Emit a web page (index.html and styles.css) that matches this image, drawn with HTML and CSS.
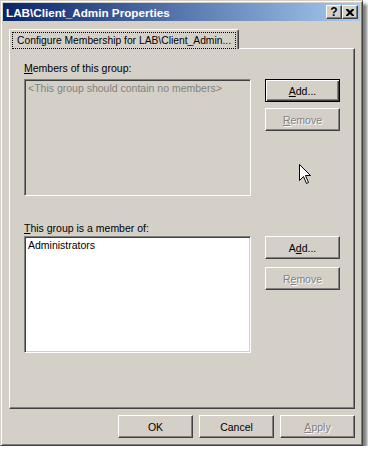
FILE: index.html
```html
<!DOCTYPE html>
<html lang="en">
<head>
  <meta charset="UTF-8">
  <title>LAB\Client_Admin Properties</title>
  <link rel="stylesheet" href="styles.css">
</head>
<body>
  <div class="window">
    <!-- Title bar -->
    <div class="titlebar">
      <span class="title">LAB\Client_Admin Properties</span>
      <div class="caption-buttons">
        <div class="caption-btn">?</div>
        <div class="caption-btn">
          <svg width="8" height="7" viewBox="0 0 8 7"><path d="M0 0h2l2 2 2-2h2v1l-2.5 2.5L8 6v1H6L4 5 2 7H0V6l2.5-2.5L0 1z" fill="#000"/></svg>
        </div>
      </div>
    </div>

    <!-- Tabs -->
    <div class="tabs">
      <div class="tab">
        <span class="tab-focus">Configure Membership for LAB\Client_Admin...</span>
      </div>
    </div>

    <div class="panel">
      <div class="label first"><u>M</u>embers of this group:</div>
      <div class="group-row">
        <div class="listbox disabled">
          <div class="item">&lt;This group should contain no members&gt;</div>
        </div>
        <div class="side-buttons tight">
          <div class="btn default"><u>A</u>dd...</div>
          <div class="btn disabled"><u>R</u>emove</div>
        </div>
      </div>

      <div class="label second"><u>T</u>his group is a member of:</div>
      <div class="group-row">
        <div class="listbox">
          <div class="item">Administrators</div>
        </div>
        <div class="side-buttons">
          <div class="btn">A<u>d</u>d...</div>
          <div class="btn disabled">R<u>e</u>move</div>
        </div>
      </div>
    </div>

    <div class="footer">
      <div class="btn">OK</div>
      <div class="btn">Cancel</div>
      <div class="btn disabled"><u>A</u>pply</div>
    </div>

    <!-- mouse pointer -->
    <svg class="cursor" width="13" height="21" viewBox="0 0 13 21">
      <path d="M0.5 0.5V16.5L4.5 12.5L7.5 19.5L9.5 18.5L6.5 11.5H11.5Z" fill="#fff" stroke="#000" stroke-width="1"/>
    </svg>
  </div>
</body>
</html>
```

FILE: styles.css
```css
body {
  margin: 0;
  background: #fff;
  font-family: "Liberation Sans", Arial, sans-serif;
  font-size: 10.5px;
  color: #000;
}
.window {
  position: relative;
  width: 363px;
  height: 446px;
  box-sizing: border-box;
  background: #d4d0c8;
  border: 1px solid;
  border-color: #d4d0c8 #404040 #404040 #d4d0c8;
  box-shadow: inset 1px 1px #fff, inset -1px -1px #808080, 4px 4px 3px rgba(0, 0, 0, 0.5);
  padding: 2px;
}
.titlebar {
  height: 18px;
  display: flex;
  align-items: center;
  justify-content: space-between;
  background: linear-gradient(to right, #0a246a, #a6caf0);
  padding: 0 2px 0 2px;
}
.title {
  color: #fff;
  font-weight: bold;
  font-size: 11.7px;
  padding-left: 1px;
}
.caption-buttons {
  display: flex;
}
.caption-btn {
  width: 16px;
  height: 14px;
  box-sizing: border-box;
  background: #d4d0c8;
  border: 1px solid;
  border-color: #fff #404040 #404040 #fff;
  box-shadow: inset -1px -1px #808080;
  display: flex;
  align-items: center;
  justify-content: center;
  font-weight: bold;
  font-size: 12px;
  line-height: 1;
}
.tabs {
  display: flex;
  margin: 8px 0 -1px 6px;
  position: relative;
}
.tab {
  height: 20px;
  box-sizing: border-box;
  padding: 2px 2px 0 2px;
  border-top: 1px solid #fff;
  border-left: 1px solid #fff;
  border-right: 1px solid #404040;
  box-shadow: inset -1px 0 #808080;
  border-radius: 2px 2px 0 0;
  background: #d4d0c8;
}
.tab-focus {
  display: block;
  border: 1px dotted #000;
  padding: 1px 4px 1px 4px;
  font-size: 10.3px;
  line-height: 13px;
}
.panel {
  width: 346px;
  height: 361px;
  box-sizing: border-box;
  margin-left: 6px;
  border: 1px solid;
  border-color: #fff #404040 #404040 #fff;
  box-shadow: inset -1px -1px #808080;
  padding: 12px 0 0 14px;
}
.label {
  height: 14px;
  line-height: 14px;
}
.label u, .btn u {
  text-decoration-thickness: 1px;
  text-underline-offset: 1px;
}
.label.first {
  margin-top: 0;
  margin-bottom: 4px;
}
.label.second {
  margin-top: 25px;
  margin-bottom: 1px;
}
.group-row {
  display: flex;
  gap: 14px;
  align-items: flex-start;
}
.listbox {
  width: 227px;
  height: 117px;
  box-sizing: border-box;
  background: #fff;
  border: 1px solid;
  border-color: #808080 #fff #fff #808080;
  box-shadow: inset 1px 1px #404040, inset -1px -1px #d4d0c8;
  padding: 2px 3px;
}
.listbox.disabled {
  background: #d4d0c8;
  color: #808080;
}
.item {
  line-height: 13px;
  white-space: nowrap;
}
.side-buttons {
  display: flex;
  flex-direction: column;
  gap: 8px;
}
.side-buttons.tight {
  gap: 6px;
}
.btn {
  width: 75px;
  height: 23px;
  box-sizing: border-box;
  border: 1px solid;
  border-color: #fff #404040 #404040 #fff;
  box-shadow: inset -1px -1px #808080;
  display: flex;
  align-items: center;
  justify-content: center;
  background: #d4d0c8;
}
.btn.default {
  border: 1px solid #000;
  box-shadow: inset 1px 1px #fff, inset -1px -1px #404040, inset -2px -2px #808080;
}
.btn.disabled {
  color: #808080;
  text-shadow: 1px 1px #fff;
}
.footer {
  width: 346px;
  margin: 6px 0 0 6px;
  display: flex;
  justify-content: flex-end;
  gap: 6px;
}
.cursor {
  position: absolute;
  left: 298px;
  top: 163px;
}
```
